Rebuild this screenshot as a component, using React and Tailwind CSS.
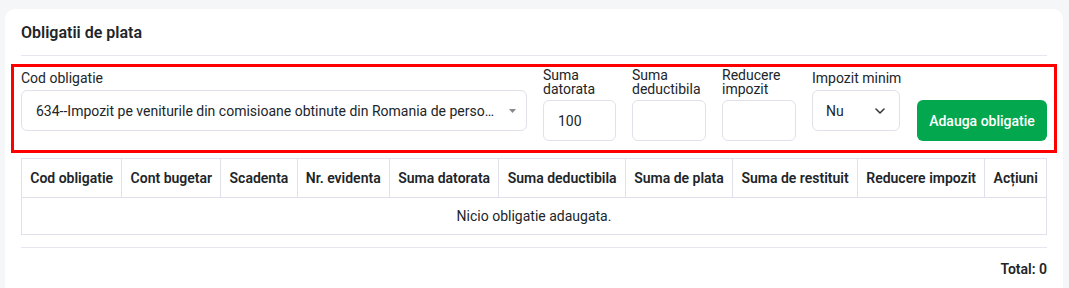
import React from 'react'

const columns = [
  'Cod obligatie',
  'Cont bugetar',
  'Scadenta',
  'Nr. evidenta',
  'Suma datorata',
  'Suma deductibila',
  'Suma de plata',
  'Suma de restituit',
  'Reducere impozit',
  'Acțiuni',
];

function NumberField({ label, value, className }) {
  return (
    <div className={`flex flex-col ${className}`}>
      <label className="mb-1 text-sm leading-[14px] text-[#212529]">{label}</label>
      <input
        type="text"
        defaultValue={value}
        className="h-[41px] w-full rounded-md border border-[#e0e1ea] bg-white px-[14px] text-sm text-[#212529] outline-none"
      />
    </div>
  );
}

function App() {
  return (
    <div className="min-h-screen bg-[#f5f6f8] pl-[5px] pr-[6px] pt-[9px] font-['Roboto',sans-serif] text-[#212529]">
      <div className="rounded-[10px] bg-white px-4 pt-3 pb-10">
        <h2 className="text-base font-semibold leading-6">Obligatii de plata</h2>
        <div className="mt-2.5 border-t border-[#e6e6f0]" />

        <div className="-mx-[10px] mt-2 border-[3px] border-[#ff0000] px-[7px] pt-px pb-[9px]">
          <div className="flex items-end gap-4">
            <div className="mb-[10px] flex min-w-0 flex-1 flex-col">
              <label className="mb-1 text-sm leading-4">Cod obligatie</label>
              <div className="relative flex h-[41px] items-center rounded-md border border-[#e0e1ea] bg-white pl-[14px] pr-[28px]">
                <span className="truncate text-sm">
                  634--Impozit pe veniturile din comisioane obtinute din Romania de persoane juridice nerezidente
                </span>
                <svg className="absolute right-[10px] top-[18px]" width="7" height="4" viewBox="0 0 7 4">
                  <path d="M0 0h7L3.5 4z" fill="#888" />
                </svg>
              </div>
            </div>

            <NumberField label="Suma datorata" value="100" className="w-[73px]" />
            <NumberField label="Suma deductibila" value="" className="w-[74px]" />
            <NumberField label="Reducere impozit" value="" className="w-[74px]" />

            <div className="mb-[10px] flex w-[88px] flex-col">
              <label className="mb-1 whitespace-nowrap text-sm leading-4">Impozit minim</label>
              <div className="flex h-[41px] items-center justify-between rounded-md border border-[#e0e1ea] bg-white pl-[13px] pr-[14px]">
                <span className="text-sm">Nu</span>
                <svg width="10" height="6" viewBox="0 0 10 6" fill="none">
                  <path d="M1 1l4 4 4-4" stroke="#333" strokeWidth="1.5" strokeLinecap="round" strokeLinejoin="round" />
                </svg>
              </div>
            </div>

            <button className="ml-px h-[41px] w-[130px] rounded-md bg-[#03a84e] text-sm font-medium text-white">
              Adauga obligatie
            </button>
          </div>
        </div>

        <table className="mt-[5px] w-full border-collapse border border-[#e0e1ea] text-sm">
          <thead>
            <tr>
              {columns.map(col => (
                <th
                  key={col}
                  className="whitespace-nowrap border border-[#e0e1ea] px-2 py-[9px] text-center font-semibold leading-5"
                >
                  {col}
                </th>
              ))}
            </tr>
          </thead>
          <tbody>
            <tr>
              <td colSpan={columns.length} className="border border-[#e0e1ea] py-2 text-center leading-5">
                Nicio obligatie adaugata.
              </td>
            </tr>
          </tbody>
        </table>

        <div className="mt-3 border-t border-[#e6e6f0]" />
        <div className="mt-[11px] text-right text-sm font-semibold leading-5">Total: 0</div>
      </div>
    </div>
  );
}

export default App;
